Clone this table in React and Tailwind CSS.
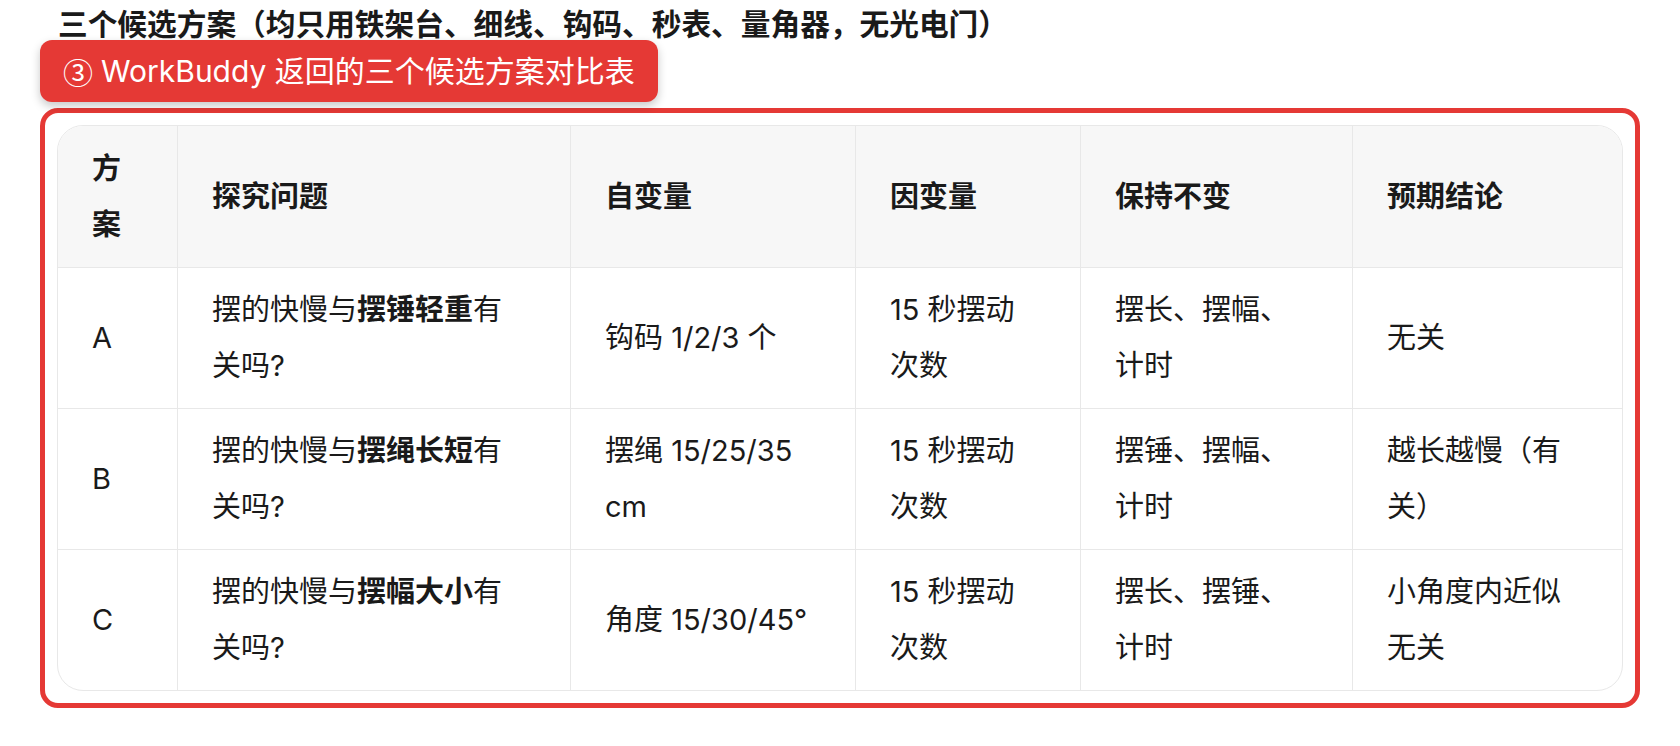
import React from "react";

const cols = "grid-cols-[119px_393px_285px_225px_272px_270px]";

const headers = [["方", "案"], ["探究问题"], ["自变量"], ["因变量"], ["保持不变"], ["预期结论"]];

const rows = [
  {
    id: "A",
    bold: "摆锤轻重",
    iv: ["钩码 1/2/3 个"],
    dv: ["15 秒摆动", "次数"],
    keep: ["摆长、摆幅、", "计时"],
    res: ["无关"],
  },
  {
    id: "B",
    bold: "摆绳长短",
    iv: ["摆绳 15/25/35", "cm"],
    dv: ["15 秒摆动", "次数"],
    keep: ["摆锤、摆幅、", "计时"],
    res: ["越长越慢（有", "关）"],
  },
  {
    id: "C",
    bold: "摆幅大小",
    iv: ["角度 15/30/45°"],
    dv: ["15 秒摆动", "次数"],
    keep: ["摆长、摆锤、", "计时"],
    res: ["小角度内近似", "无关"],
  },
];

const Cell = ({ first, header, children }) => (
  <div
    className={`h-[141px] flex flex-col justify-center pl-[34px] pr-[20px] ${first ? "" : "border-l border-[#e8e8e8]"} ${
      header ? "bg-[#f7f7f7] font-semibold" : "border-t border-[#e8e8e8]"
    }`}
  >
    {children}
  </div>
);

const Lines = ({ lines }) => (
  <>
    {lines.map((l, i) => (
      <div key={i} className="whitespace-nowrap leading-[56px]">
        {l}
      </div>
    ))}
  </>
);

export default function App() {
  return (
    <div className="min-h-screen bg-white text-[#1a1a1a] font-[Inter,'Noto_Sans_CJK_SC',sans-serif]">
      {/* title */}
      <div className="h-[40px] pt-[4px] pl-[58px] text-[29.7px] leading-[40px] font-semibold whitespace-nowrap">
        三个候选方案（均只用铁架台、细线、钩码、秒表、量角器，无光电门）
      </div>

      {/* annotation badge */}
      <div className="pl-[40px]">
        <div className="relative inline-flex items-center h-[62px] px-[23px] rounded-[12px] bg-[#e53935] text-white text-[30px] shadow-[0_4px_10px_rgba(0,0,0,0.22)] whitespace-nowrap">
          <span className="font-['Noto_Sans_CJK_SC',sans-serif] mr-[8px]">③</span>
          WorkBuddy 返回的三个候选方案对比表
        </div>
      </div>

      {/* highlighted table */}
      <div className="mt-[6px] ml-[40px] w-[1600px] border-[5px] border-[#e53935] rounded-[18px] p-[12px] pr-[11px]">
        <div className="w-[1566px] border border-[#e8e8e8] rounded-[26px] overflow-hidden text-[29px]">
          <div className={`grid ${cols}`}>
            {headers.map((h, i) => (
              <Cell key={i} first={i === 0} header>
                <Lines lines={h} />
              </Cell>
            ))}
            {rows.map((r) => (
              <React.Fragment key={r.id}>
                <Cell first>
                  <Lines lines={[r.id]} />
                </Cell>
                <Cell>
                  <Lines
                    lines={[
                      <>
                        摆的快慢与<span className="font-semibold">{r.bold}</span>有
                      </>,
                      "关吗?",
                    ]}
                  />
                </Cell>
                <Cell>
                  <Lines lines={r.iv} />
                </Cell>
                <Cell>
                  <Lines lines={r.dv} />
                </Cell>
                <Cell>
                  <Lines lines={r.keep} />
                </Cell>
                <Cell>
                  <Lines lines={r.res} />
                </Cell>
              </React.Fragment>
            ))}
          </div>
        </div>
      </div>
    </div>
  );
}
